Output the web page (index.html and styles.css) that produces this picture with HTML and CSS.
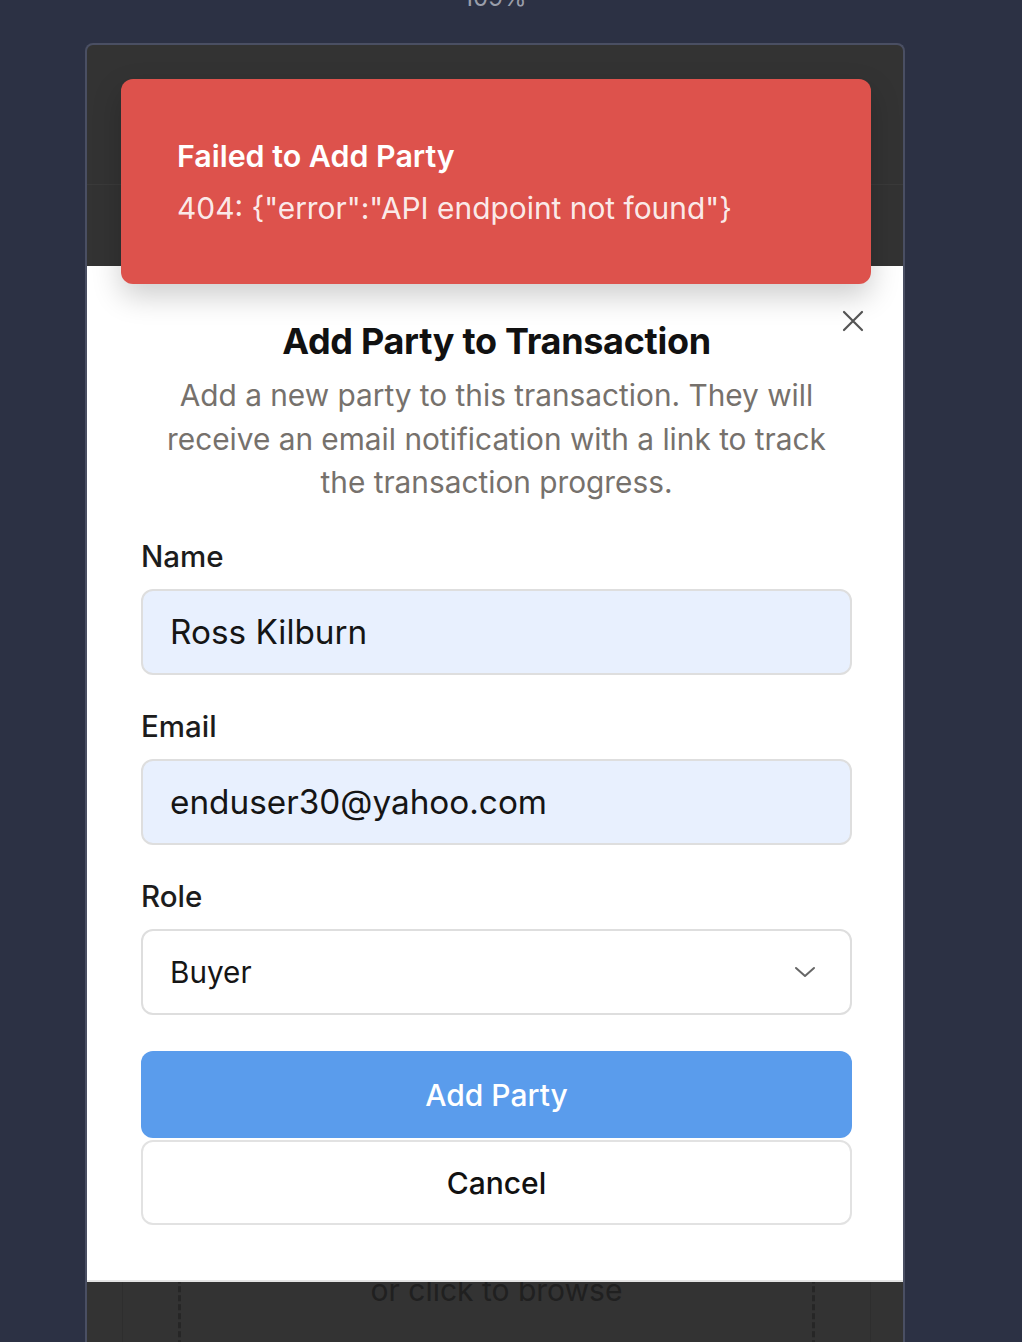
FILE: index.html
```html
<!DOCTYPE html>
<html lang="en">
<head>
<meta charset="utf-8">
<title>Add Party to Transaction</title>
<link rel="stylesheet" href="styles.css">
</head>
<body>
<div class="zoom-label">109%</div>
<div class="frame">
  <div class="page">
    <div class="page-header"></div>
    <div class="page-card">
      <div class="dropzone">
        <p class="dropzone-text">or click to browse</p>
      </div>
    </div>
  </div>

  <div class="modal">
    <button class="close-btn" aria-label="Close">
      <svg width="22" height="22" viewBox="0 0 22 22" fill="none" stroke="#555" stroke-width="2.2" stroke-linecap="round"><path d="M2 2L20 20M20 2L2 20"/></svg>
    </button>
    <h2 class="modal-title">Add Party to Transaction</h2>
    <p class="modal-desc">Add a new party to this transaction. They will receive an email notification with a link to track the transaction progress.</p>

    <div class="field">
      <label class="field-label">Name</label>
      <div class="input input-filled">Ross Kilburn</div>
    </div>
    <div class="field">
      <label class="field-label">Email</label>
      <div class="input input-filled">enduser30@yahoo.com</div>
    </div>
    <div class="field">
      <label class="field-label">Role</label>
      <div class="input input-select">
        <span>Buyer</span>
        <svg width="22" height="12" viewBox="0 0 22 12" fill="none" stroke="#666" stroke-width="2" stroke-linecap="round" stroke-linejoin="round"><path d="M2 2L11 10L20 2"/></svg>
      </div>
    </div>

    <button class="btn btn-primary">Add Party</button>
    <button class="btn btn-secondary">Cancel</button>
  </div>

  <div class="toast">
    <div class="toast-title">Failed to Add Party</div>
    <div class="toast-body">404: {"error":"API endpoint not found"}</div>
  </div>
</div>
</body>
</html>
```

FILE: styles.css
```css
* { box-sizing: border-box; }
html, body {
  margin: 0;
  padding: 0;
  height: 1342px;
  overflow: hidden;
}
body {
  background: #2c3144;
  font-family: Inter, "Noto Sans", "Liberation Sans", sans-serif;
}
.zoom-label {
  height: 43px;
  margin-top: -14px;
  margin-bottom: 14px;
  width: 990px;
  text-align: center;
  font-size: 24px;
  line-height: 24px;
  color: #9a9eaa;
}
.frame {
  position: relative;
  margin-left: 85px;
  width: 820px;
  height: 1330px;
  border: 2px solid #4a4f63;
  border-bottom: none;
  border-radius: 8px 8px 0 0;
  background: #333333;
  overflow: hidden;
}
.page-header {
  height: 140px;
  border-bottom: 1px solid #3a3a3a;
}
.page-card {
  margin: 30px 32px 0 35px;
  border: 1px solid #2e2e2e;
  padding: 20px 55px 0 55px;
}
.dropzone {
  border-left: 3px dashed #262626;
  border-right: 3px dashed #262626;
  border-top: 3px dashed #262626;
  padding-top: 1031px;
  height: 1200px;
}
.dropzone-text {
  margin: 0;
  text-align: center;
  font-size: 30px;
  line-height: 40px;
  color: #202020;
}

.modal {
  position: absolute;
  top: 221px;
  left: 0;
  right: 0;
  background: #ffffff;
  padding: 53px 51px 55px 54px;
  border-bottom: 2px solid #e4e4e4;
  z-index: 2;
}
.close-btn {
  position: absolute;
  top: 44px;
  right: 39px;
  width: 22px;
  height: 22px;
  padding: 0;
  border: none;
  background: none;
}
.close-btn svg { display: block; }
.modal-title {
  margin: 0;
  text-align: center;
  font-size: 36px;
  line-height: 44px;
  font-weight: 700;
  letter-spacing: -0.3px;
  color: #111111;
}
.modal-desc {
  margin: 11px auto 0;
  max-width: 690px;
  text-align: center;
  font-size: 29.8px;
  line-height: 43.5px;
  color: #76716c;
}
.field { margin-top: 33px; }
.field-label {
  display: block;
  height: 36px;
  line-height: 36px;
  font-size: 29.5px;
  font-weight: 500;
  color: #1c1c1c;
  margin-bottom: 15px;
}
.input {
  height: 86px;
  border: 2px solid #dedede;
  border-radius: 12px;
  padding: 0 27px;
  display: flex;
  align-items: center;
  font-size: 33.3px;
  color: #151515;
}
.input-filled { background: #e8f0fe; }
.input-select {
  background: #ffffff;
  justify-content: space-between;
  font-size: 29.7px;
  padding-right: 34px;
}
.input-select svg { display: block; }
.btn {
  display: block;
  width: 100%;
  border-radius: 12px;
  font-family: inherit;
  font-size: 30px;
  font-weight: 500;
  text-align: center;
}
.btn-primary {
  margin-top: 36px;
  height: 87px;
  border: none;
  background: #5a9cec;
  color: #ffffff;
  padding-top: 3px;
}
.btn-secondary {
  margin-top: 2px;
  height: 85px;
  border: 2px solid #e2e2e2;
  background: #ffffff;
  color: #111111;
  padding-top: 3px;
}

.toast {
  position: absolute;
  top: 34px;
  left: 34px;
  width: 750px;
  height: 205px;
  background: #dd524c;
  border-radius: 12px;
  box-shadow: 0 12px 30px rgba(0, 0, 0, 0.2);
  padding: 0 30px 0 56px;
  display: flex;
  flex-direction: column;
  justify-content: center;
  gap: 12px;
  z-index: 3;
  color: #ffffff;
}
.toast-title {
  font-size: 30.4px;
  line-height: 40px;
  font-weight: 600;
}
.toast-body {
  font-size: 29.9px;
  line-height: 40px;
  color: rgba(255, 255, 255, 0.9);
}
```
